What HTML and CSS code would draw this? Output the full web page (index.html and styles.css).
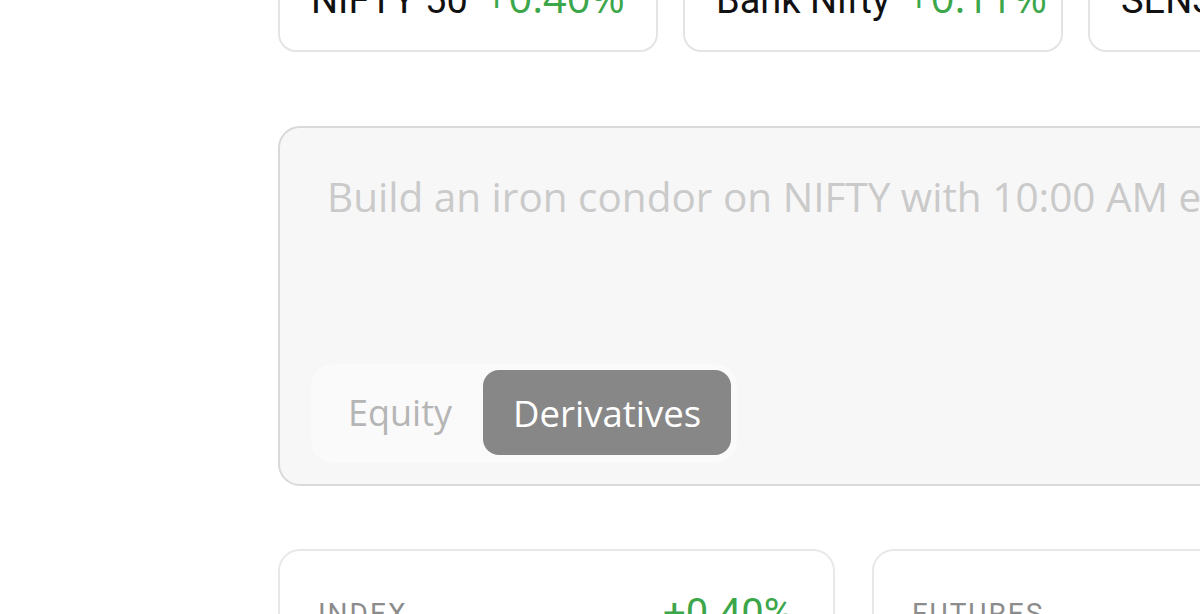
FILE: index.html
```html
<!DOCTYPE html>
<html lang="en">
<head>
    <meta charset="UTF-8">
    <meta name="viewport" content="width=device-width, initial-scale=1.0">
    <title>Strategy Builder</title>
    <link rel="stylesheet" href="styles.css">
</head>
<body>
<main class="page">
    <section class="ticker-row">
        <div class="ticker">
            <span class="ticker-name">NIFTY 50</span>
            <span class="ticker-change">+0.40%</span>
        </div>
        <div class="ticker">
            <span class="ticker-name">Bank Nifty</span>
            <span class="ticker-change">+0.11%</span>
        </div>
        <div class="ticker">
            <span class="ticker-name">SENSEX</span>
            <span class="ticker-change">+0.32%</span>
        </div>
    </section>

    <section class="prompt-box">
        <div class="prompt-text">Build an iron condor on NIFTY with 10:00 AM entry</div>
        <div class="segment">
            <button class="segment-btn">Equity</button>
            <button class="segment-btn active">Derivatives</button>
        </div>
    </section>

    <section class="summary-row">
        <div class="summary-card">
            <div class="summary-head">
                <span class="summary-label">INDEX</span>
                <span class="summary-value">+0.40%</span>
            </div>
        </div>
        <div class="summary-card">
            <div class="summary-head">
                <span class="summary-label">FUTURES</span>
                <span class="summary-value">+0.11%</span>
            </div>
        </div>
    </section>
</main>
</body>
</html>
```

FILE: styles.css
```css
body {
    margin: 0;
    background-color: #ffffff;
    font-family: Roboto, "Liberation Sans", sans-serif;
    overflow: hidden;
}

.page {
    margin-top: -51px;
    margin-left: 278px;
    width: 1200px;
}

.ticker-row {
    display: flex;
    gap: 25px;
}
.ticker {
    box-sizing: border-box;
    width: 380px;
    flex-shrink: 0;
    display: flex;
    align-items: baseline;
    gap: 17px;
    padding: 22px 31px 26px;
    border: 2px solid #e4e4e4;
    border-radius: 18px;
    font-size: 38px;
    line-height: 48px;
    white-space: nowrap;
}
.ticker-name {
    color: #111;
}
.ticker-change {
    font-family: "Open Sans", sans-serif;
    font-size: 41.5px;
    color: #3ba64a;
}

.prompt-box {
    margin-top: 74px;
    height: 360px;
    display: flex;
    flex-direction: column;
    justify-content: space-between;
    padding: 0 31px 21px;
    background-color: #f7f7f7;
    border: 2px solid #d9d9d9;
    border-radius: 22px;
    box-sizing: border-box;
}
.prompt-text {
    padding: 44px 16px 0;
    font-family: "Open Sans", sans-serif;
    font-size: 40.5px;
    line-height: 50px;
    color: #cacaca;
    white-space: nowrap;
}

.segment {
    align-self: flex-start;
    display: flex;
    padding: 6px 6px 8px;
    background-color: #fafafa;
    border-radius: 22px;
}
.segment-btn {
    height: 85px;
    padding: 0 31px;
    border: none;
    border-radius: 16px;
    background: none;
    font-family: "Open Sans", sans-serif;
    font-size: 36px;
    color: #b5b5b5;
}
.segment-btn.active {
    padding: 0 30px;
    background-color: #878787;
    color: #ffffff;
    font-size: 36.5px;
    font-weight: 500;
}

.summary-row {
    margin-top: 63px;
    display: flex;
    gap: 37px;
}
.summary-card {
    box-sizing: border-box;
    width: 557px;
    flex-shrink: 0;
    height: 160px;
    padding: 39px 40px 0 38px;
    border: 2px solid #e8e8e8;
    border-radius: 22px;
}
.summary-head {
    display: flex;
    justify-content: space-between;
    align-items: center;
}
.summary-label {
    font-size: 28px;
    letter-spacing: 2px;
    color: #8c8c8c;
}
.summary-value {
    font-size: 40px;
    color: #3ba64a;
}
```
